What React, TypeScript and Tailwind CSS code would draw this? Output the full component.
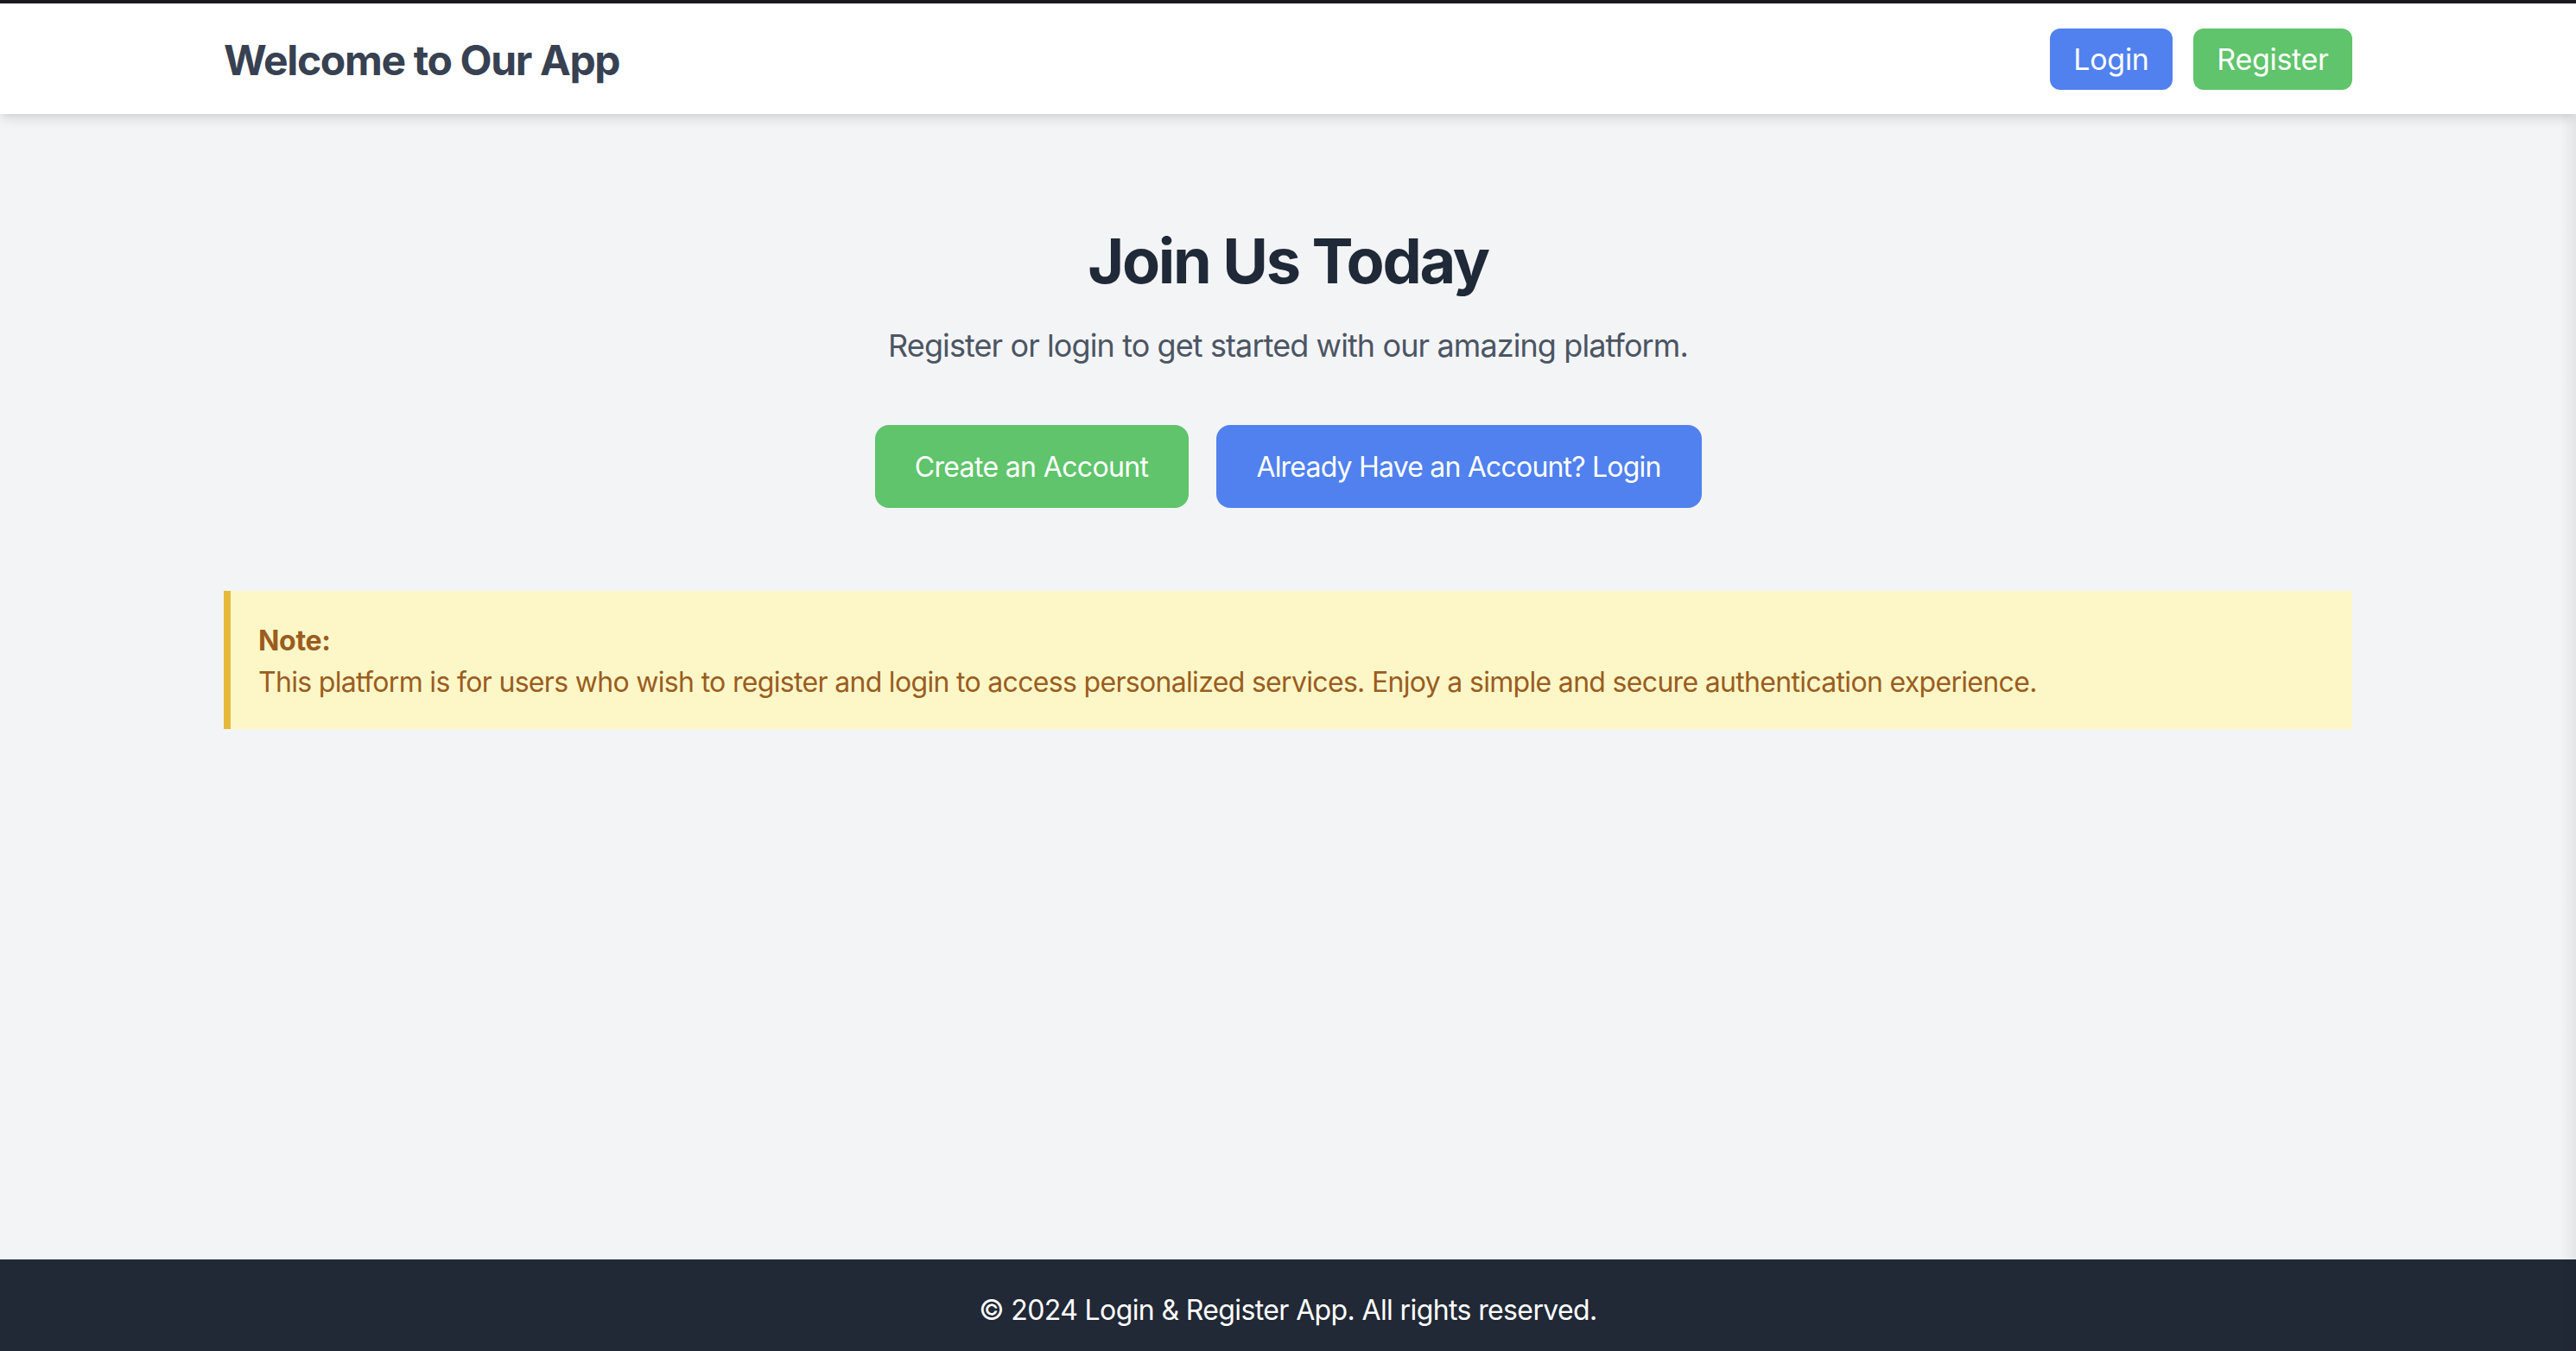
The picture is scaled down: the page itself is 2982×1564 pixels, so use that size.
import React from "react";

export default function App() {
  return (
    <div className="relative flex min-h-[1564px] h-[1564px] flex-col overflow-hidden bg-[#f3f4f6] font-['Inter',sans-serif]">
      <div className="h-[4px] w-full shrink-0 bg-[#1b1b1d]" />
      <header className="relative z-10 h-[128px] shrink-0 bg-white shadow-[0_8px_12px_-2px_rgba(0,0,0,0.10),0_4px_8px_-4px_rgba(0,0,0,0.08)]">
        <div className="mx-auto flex h-full max-w-[2560px] items-center justify-between px-12">
          <h1 className="pt-[4px] text-[48px] font-bold leading-[64px] tracking-[-1.35px] text-[#374151]">Welcome to Our App</h1>
          <nav className="flex items-center gap-[24px]">
            <button className="h-[71px] w-[142px] rounded-[12px] bg-[#5081ee] pt-[2px] text-center text-[34px] leading-[48px] tracking-[-0.3px] text-white">Login</button>
            <button className="h-[71px] w-[184px] rounded-[12px] bg-[#5fc46b] pt-[2px] text-center text-[34px] leading-[48px] tracking-[-0.3px] text-white">Register</button>
          </nav>
        </div>
      </header>
      <main className="flex-1">
        <div className="mx-auto max-w-[2560px] px-12 pt-[130px]">
          <section className="flex flex-col items-center text-center">
            <h2 className="text-[72px] font-bold leading-[80px] tracking-[-2.3px] text-[#1f2937]">Join Us Today</h2>
            <p className="mt-[30px] text-[36px] leading-[56px] tracking-[-0.9px] text-[#4b5563]">Register or login to get started with our amazing platform.</p>
            <div className="mt-[64px] flex items-center gap-[32px]">
              <button className="h-[96px] w-[363px] rounded-[16px] bg-[#5fc46b] pt-[2px] text-center text-[32px] leading-[48px] tracking-[-0.65px] text-white">Create an Account</button>
              <button className="h-[96px] w-[562px] rounded-[16px] bg-[#5081ee] pt-[2px] text-center text-[32px] leading-[48px] tracking-[-0.8px] text-white">Already Have an Account? Login</button>
            </div>
          </section>
          <div className="mt-[96px] border-l-[8px] border-[#e6b93c] bg-[#fdf7c8] pt-[34px] pb-[30px] pl-[32px] pr-[32px] text-[32px] leading-[48px] tracking-[-0.68px] text-[#9a5d1f]">
            <p className="font-bold tracking-[-0.3px]">Note:</p>
            <p>This platform is for users who wish to register and login to access personalized services. Enjoy a simple and secure authentication experience.</p>
          </div>
        </div>
      </main>
      <footer className="flex h-[106px] shrink-0 items-center justify-center bg-[#212836] pt-[12px] text-[32px] leading-[48px] tracking-[-0.62px] text-white">
        <p>© 2024 Login &amp; Register App. All rights reserved.</p>
      </footer>
      <div className="pointer-events-none absolute right-0 top-[4px] bottom-0 w-[18px] bg-gradient-to-r from-transparent to-black/[0.06]" />
    </div>
  );
}
